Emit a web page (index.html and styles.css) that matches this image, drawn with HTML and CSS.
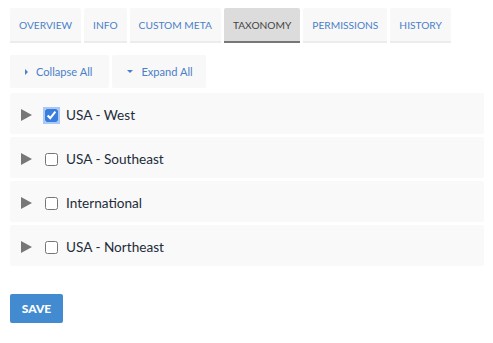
FILE: index.html
```html
<!DOCTYPE html>
<html>
<head>
    <title>Taxonomy</title>
    <link rel="stylesheet" href="styles.css">
</head>
<body>
    <ul class="tabs">
        <li class="tab">Overview</li>
        <li class="tab">Info</li>
        <li class="tab">Custom Meta</li>
        <li class="tab active">Taxonomy</li>
        <li class="tab">Permissions</li>
        <li class="tab">History</li>
    </ul>

    <div class="tools">
        <button class="tool"><span class="caret-right"></span>Collapse All</button>
        <button class="tool expand"><span class="caret-down"></span>Expand All</button>
    </div>

    <ul class="terms">
        <li class="term">
            <span class="arrow"></span>
            <input type="checkbox" checked>
            <span class="label">USA - West</span>
        </li>
        <li class="term">
            <span class="arrow"></span>
            <input type="checkbox">
            <span class="label">USA - Southeast</span>
        </li>
        <li class="term">
            <span class="arrow"></span>
            <input type="checkbox">
            <span class="label">International</span>
        </li>
        <li class="term">
            <span class="arrow"></span>
            <input type="checkbox">
            <span class="label">USA - Northeast</span>
        </li>
    </ul>

    <button class="save">Save</button>
</body>
</html>
```

FILE: styles.css
```css
body {
    font-family: Lato, "Open Sans", sans-serif;
    background-color: #fff;
    margin: 0;
    padding: 8px 9px 0 10px;
}

ul.tabs {
    list-style: none;
    margin: 0;
    padding: 0;
    display: flex;
    gap: 3px;
}

.tab {
    height: 33px;
    line-height: 34px;
    padding: 0 9px;
    font-size: 10.2px;
    white-space: nowrap;
    text-transform: uppercase;
    color: #4a80c8;
    background-color: #f8f8f8;
    border-bottom: 2px solid #ececec;
    border-radius: 2px 2px 0 0;
}

.tab.active {
    color: #444;
    background-color: #dcdcdc;
    border-bottom-color: #777;
}

.tools {
    display: flex;
    gap: 3px;
    margin-top: 12px;
}

.tool {
    height: 33px;
    padding: 0 17px 0 15px;
    font-family: inherit;
    font-size: 11.1px;
    color: #4a80c8;
    background-color: #f8f8f8;
    border: none;
    border-radius: 2px;
    display: flex;
    align-items: center;
}

.tool.expand {
    padding-right: 13px;
}

.caret-right {
    width: 0;
    height: 0;
    border-top: 3px solid transparent;
    border-bottom: 3px solid transparent;
    border-left: 3px solid #4a80c8;
    margin-right: 8px;
}

.caret-down {
    width: 0;
    height: 0;
    border-left: 3px solid transparent;
    border-right: 3px solid transparent;
    border-top: 3px solid #4a80c8;
    margin-right: 8px;
}

ul.terms {
    list-style: none;
    margin: 5px 0 0 0;
    padding: 0;
    display: flex;
    flex-direction: column;
    gap: 3px;
}

.term {
    height: 41px;
    box-sizing: border-box;
    padding: 3px 0 0 11px;
    display: flex;
    align-items: center;
    background-color: #f9f9f9;
    border-radius: 2px;
}

.arrow {
    width: 0;
    height: 0;
    border-top: 6px solid transparent;
    border-bottom: 6px solid transparent;
    border-left: 11px solid #777;
}

.term input {
    width: 13px;
    height: 13px;
    margin: 0 0 0 13px;
}

.term input:checked {
    accent-color: #3b7ddd;
    box-shadow: 0 0 0 2px #a8c8f5;
    border-radius: 3px;
}

.label {
    margin-left: 8px;
    font-size: 13.6px;
    color: #232c3a;
}

.save {
    margin-top: 28px;
    width: 53px;
    height: 29px;
    font-family: inherit;
    font-size: 12px;
    font-weight: 900;
    text-transform: uppercase;
    color: #fff;
    background-color: #428bd0;
    border: none;
    border-radius: 2px;
}
```
